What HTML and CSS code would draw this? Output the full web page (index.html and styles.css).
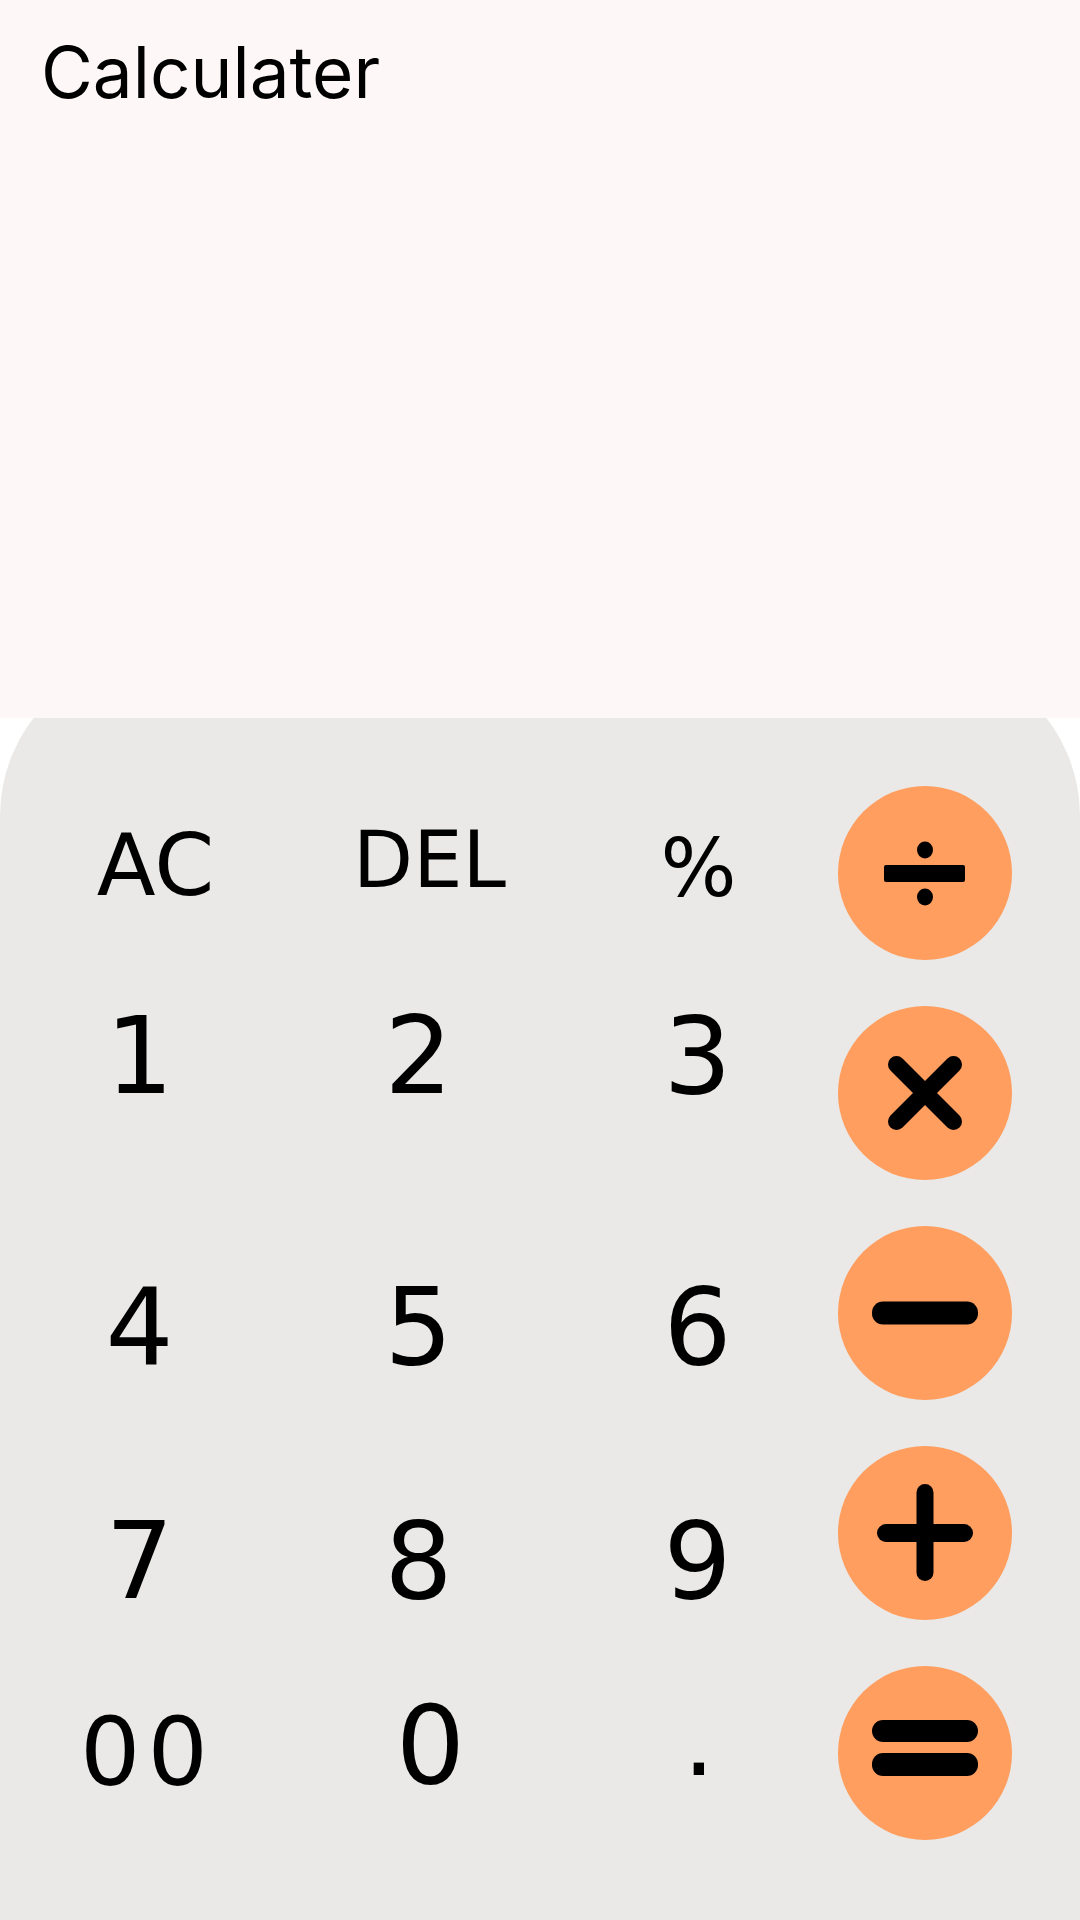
FILE: index.html
```html
<!DOCTYPE html>
<html lang="en">
<head>
<meta charset="utf-8">
<title>Calculater</title>
<link rel="stylesheet" href="styles.css">
</head>
<body>
<div class="app">
  <header class="display">
    <h1 class="title">Calculater</h1>
  </header>
  <main class="pad">
    <div class="keys">
      <div class="key key-ac"><span>AC</span></div>
      <div class="key key-del"><span>DEL</span></div>
      <div class="key key-pct"><span>%</span></div>
      <div class="key num"><span>1</span></div>
      <div class="key num"><span>2</span></div>
      <div class="key num"><span>3</span></div>
      <div class="key num"><span>4</span></div>
      <div class="key num"><span>5</span></div>
      <div class="key num"><span>6</span></div>
      <div class="key num"><span>7</span></div>
      <div class="key num"><span>8</span></div>
      <div class="key num"><span>9</span></div>
      <div class="key key-00"><span>00</span></div>
      <div class="key key-0"><span>0</span></div>
      <div class="key key-dot"><span>.</span></div>
    </div>
    <div class="ops">
      <div class="op" aria-label="divide">
        <svg viewBox="0 0 174 174" width="174" height="174">
          <circle cx="87" cy="87" r="87" fill="#FF9E5E"/>
          <ellipse cx="87" cy="64" rx="8" ry="8.5" fill="#000"/>
          <rect x="46" y="79" width="81" height="17" rx="2" fill="#000"/>
          <ellipse cx="87" cy="111" rx="8" ry="8.5" fill="#000"/>
        </svg>
      </div>
      <div class="op" aria-label="multiply">
        <svg viewBox="0 0 174 174" width="174" height="174">
          <circle cx="87" cy="87" r="87" fill="#FF9E5E"/>
          <path d="M58.5 58.5 L115.5 115.5 M115.5 58.5 L58.5 115.5" stroke="#000" stroke-width="17" stroke-linecap="round" fill="none"/>
        </svg>
      </div>
      <div class="op" aria-label="minus">
        <svg viewBox="0 0 174 174" width="174" height="174">
          <circle cx="87" cy="87" r="87" fill="#FF9E5E"/>
          <rect x="34" y="75.5" width="106" height="23" rx="11" fill="#000"/>
        </svg>
      </div>
      <div class="op" aria-label="plus">
        <svg viewBox="0 0 174 174" width="174" height="174">
          <circle cx="87" cy="87" r="87" fill="#FF9E5E"/>
          <rect x="39" y="78" width="96" height="18" rx="9" fill="#000"/>
          <rect x="78.5" y="38" width="17" height="97" rx="8.5" fill="#000"/>
        </svg>
      </div>
      <div class="op" aria-label="equals">
        <svg viewBox="0 0 174 174" width="174" height="174">
          <circle cx="87" cy="87" r="87" fill="#FF9E5E"/>
          <rect x="34" y="54" width="106" height="22" rx="11" fill="#000"/>
          <rect x="34" y="87" width="106" height="23" rx="11" fill="#000"/>
        </svg>
      </div>
    </div>
  </main>
</div>
</body>
</html>
```

FILE: styles.css
```css
* { box-sizing: border-box; }

html, body {
  margin: 0;
  padding: 0;
  background: #ffffff;
}

.app {
  width: 1080px;
  height: 1920px;
  overflow: hidden;
  display: flex;
  flex-direction: column;
}

.display {
  position: relative;
  z-index: 1;
  height: 718px;
  flex: none;
  background: #FDF7F7;
  padding: 37px 0 0 41px;
}

.title {
  margin: 0;
  font-family: Inter, "Noto Sans", sans-serif;
  font-weight: 400;
  font-size: 71px;
  line-height: 1;
  color: #000;
}

.pad {
  flex: 1;
  margin-top: -62px;
  background: #EAE9E7;
  border-radius: 160px 160px 0 0;
  padding-top: 130px;
  display: flex;
  align-items: flex-start;
}

.keys {
  display: grid;
  grid-template-columns: repeat(3, 279px);
  grid-template-rows: 158px 225px 316px 152px 230px;
  font-family: "DejaVu Sans", sans-serif;
  color: #000;
}

.key {
  display: flex;
  align-items: center;
  justify-content: center;
}

.key span {
  display: block;
  line-height: 1;
}

.num { font-size: 107px; }

.key-ac { font-size: 86px; padding-left: 32px; }
.key-del { font-size: 78px; padding-left: 22px; }
.key-del span { margin-bottom: 11px; }
.key-pct { font-size: 80px; padding-left: 2px; }
.key-pct span { margin-top: 7px; }

.key-00 { font-size: 95px; padding-left: 9px; }
.key-00 span { letter-spacing: 7px; margin-right: -7px; }
.key-0 { font-size: 109px; padding-left: 24px; }
.key-0 span { margin-bottom: 13px; }
.key-dot { font-size: 100px; padding-left: 3px; }
.key-dot span { margin-bottom: 23px; }

.ops {
  display: flex;
  flex-direction: column;
  gap: 46px;
  margin-left: 1px;
}

.op {
  width: 174px;
  height: 174px;
}

.op svg { display: block; }
```
